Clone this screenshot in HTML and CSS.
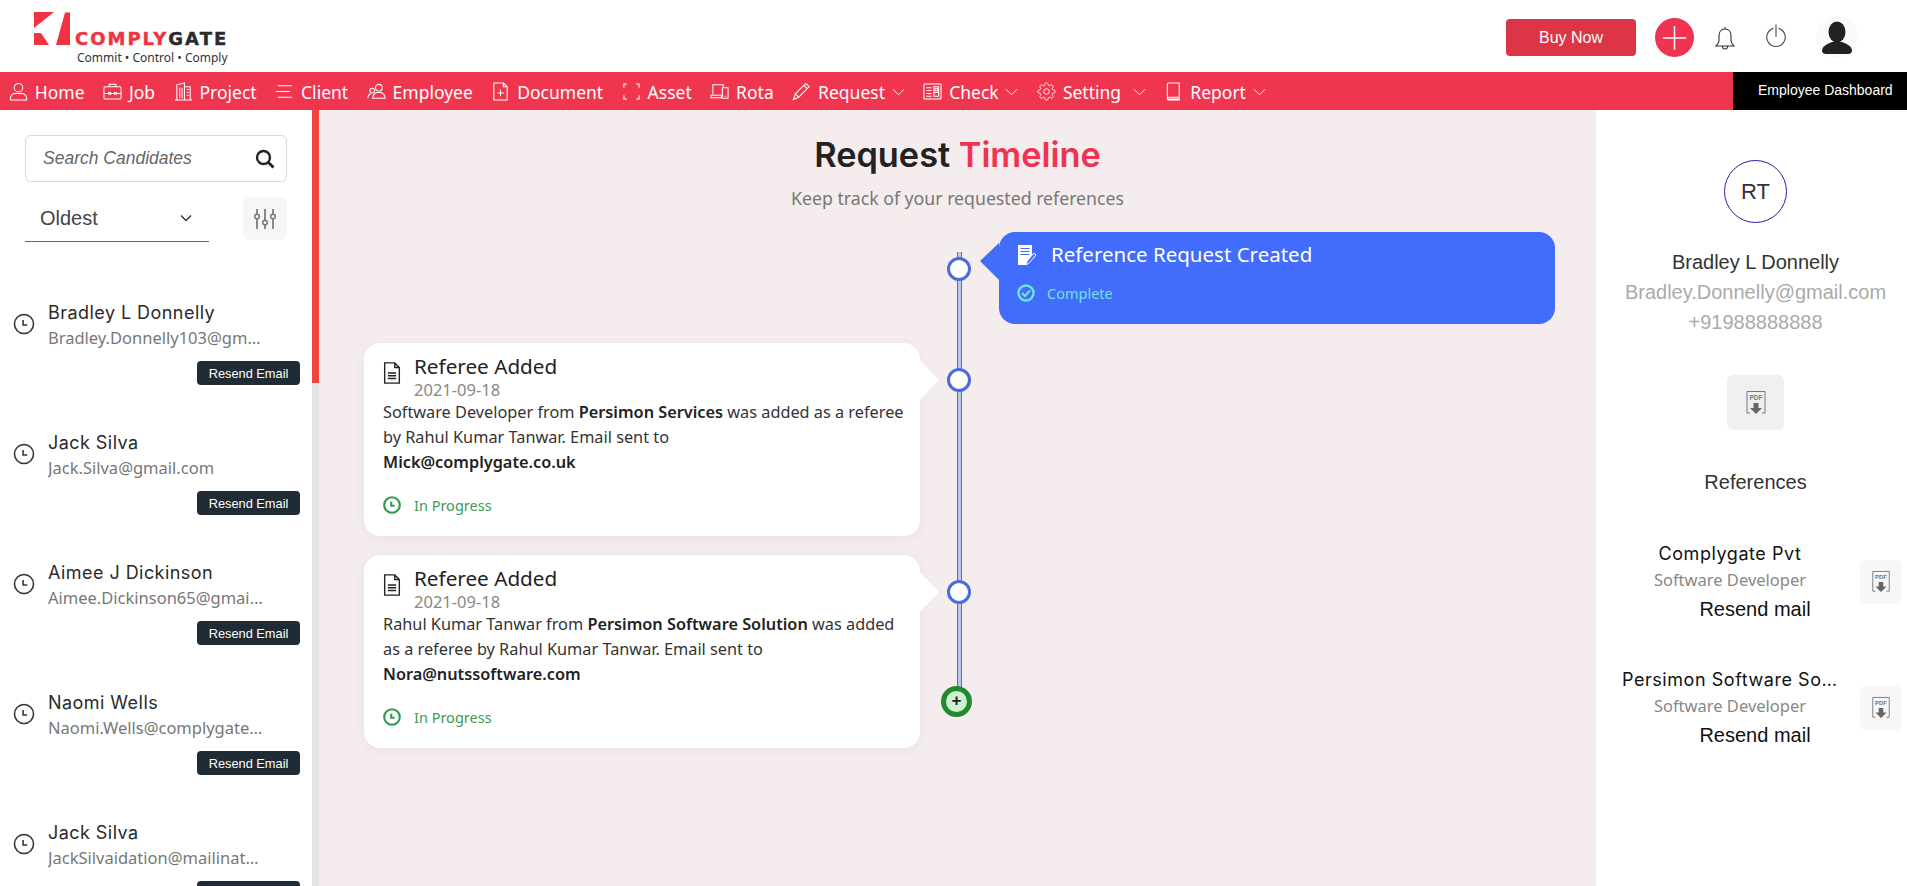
FILE: index.html
```html
<!DOCTYPE html>
<html lang="en">
<head>
<meta charset="utf-8">
<title>Request Timeline</title>
<link rel="stylesheet" href="styles.css">
</head>
<body>
<svg class="defs" width="0" height="0" aria-hidden="true">
  <symbol id="clock" viewBox="0 0 24 24"><circle cx="12" cy="12" r="10.4" fill="none" stroke="currentColor"/><path d="M11 7.500v5.500h4.500" fill="none" stroke="currentColor"/></symbol>
  <symbol id="pdf" viewBox="0 0 24 28"><path d="M3 23V2.500h18V23M3 23v1h3M21 23v1h-3" fill="none" stroke="#777" stroke-width="1"/><text x="12" y="11" text-anchor="middle" class="pdf-text">PDF</text><path d="M9.500 14h5v5h3.500l-6 6-6-6h3.500z" fill="#666"/></symbol>
  <symbol id="doc" viewBox="0 0 18 24"><path d="M1 1h11l5 5v17H1zM12 1v5h5M4.500 12h9M4.500 15h9M4.500 18h9" fill="none" stroke="#222" stroke-width="1.500"/></symbol>
</svg>

<header class="topbar">
  <div class="logo">
    <svg class="logo-mark" viewBox="0 0 37 34"><path d="M0 0h20L0 16zM0 21h7l8 12H0zM31 0.500h5V33H22z" fill="#ef3340"/></svg>
    <div class="logo-words">
      <div class="logo-name"><span class="logo-red">COMPLY</span>GATE</div>
      <div class="logo-tag">Commit • Control • Comply</div>
    </div>
  </div>
  <div class="top-actions">
    <button class="buy">Buy Now</button>
    <span class="add"><svg viewBox="0 0 40 40" width="40" height="40"><path d="M20 8v24M8 20h24" stroke="#fff" stroke-width="1.500"/></svg></span>
    <svg class="bell" viewBox="0 0 20 25" width="20" height="25"><path d="M10 3c-4 0-6 3-6 7v5c0 2-1.500 3.500-3 5h18c-1.500-1.500-3-3-3-5v-5c0-4-2-7-6-7zM10 1v2M7.500 20.500a2.500 2.500 0 0 0 5 0" fill="none" stroke="#333" stroke-width="1.100"/></svg>
    <svg class="power" viewBox="0 0 20 24" width="20" height="24"><path d="M7.500 4.400a9.200 9.200 0 1 0 5 0M10 0.500v12" fill="none" stroke="#444" stroke-width="1.100"/></svg>
    <span class="avatar"><svg viewBox="0 0 42 42" width="42" height="42"><ellipse cx="21" cy="16" rx="8.500" ry="10.500" fill="#222"/><path d="M6 35c0-5 5-7 10-9h10c5 2 10 4 10 9 0 2-2 3-4 3H10c-2 0-4-1-4-3z" fill="#222"/></svg></span>
  </div>
</header>

<nav class="navbar">
  <ul class="menu">
    <li><svg class="ni" viewBox="0 0 20 20"><circle cx="10" cy="6" r="4.500"/><path d="M1.500 19v-2c0-3 3-5 5-5h7c2 0 5 2 5 5v2z"/></svg>Home</li>
    <li><svg class="ni" viewBox="0 0 20 20"><rect x="1" y="5" width="18" height="13" rx="1.500"/><path d="M6.500 5V2.500h7V5M1 12h5M14 12h5M6 11h2v2H6zM12 11h2v2h-2zM8 12h4"/></svg>Job</li>
    <li><svg class="ni" viewBox="0 0 20 20"><path d="M3 19V3l8-2v18zM11 5h6v14H11M1 19h18M6 6v11M8.500 6v11M13.500 8h2M13.500 11h2M13.500 14h2"/></svg>Project</li>
    <li><svg class="ni" viewBox="0 0 20 20"><path d="M3 4h15M1 10h15M3 16h15"/></svg>Client</li>
    <li><svg class="ni" viewBox="0 0 20 20"><circle cx="12.500" cy="6" r="3.500"/><circle cx="5.500" cy="9" r="2.500"/><path d="M6 17c0-3 2-5 4-6h5c2 1 4 3 4 6zM1 17c0-2 1-4 3-4.500"/></svg>Employee</li>
    <li><svg class="ni" viewBox="0 0 20 20"><path d="M3 1h10l4 4v14H3zM13 1v4h4M10 8v7M6.500 11.500h7"/></svg>Document</li>
    <li><svg class="ni" viewBox="0 0 20 20"><path d="M2 6V2h3M15 2h3v4M18 14v4h-3M5 18H2v-4"/></svg>Asset</li>
    <li><svg class="ni" viewBox="0 0 20 20"><path d="M3 13V3h11v2M1 14h11v2.500H1zM13 6h6v11h-6zM16 14.500v1"/></svg>Rota</li>
    <li><svg class="ni" viewBox="0 0 20 20"><path d="M1.500 18.500l2-6L14.500 1.500 18 5 7 16zM3.500 12.500L7 16M12.500 3.500L16 7"/></svg>Request<svg class="chev" viewBox="0 0 14 8"><path d="M1 1l6 6 6-6"/></svg></li>
    <li><svg class="ni" viewBox="0 0 20 20"><rect x="1" y="2" width="18" height="16" rx="1"/><path d="M3.500 6H9M3.500 9H9M3.500 12H9M3.500 15H9M11.500 5h5v10h-5zM11.500 11h5"/><circle cx="14" cy="8" r="1.500"/></svg>Check<svg class="chev" viewBox="0 0 14 8"><path d="M1 1l6 6 6-6"/></svg></li>
    <li class="gap-l"><svg class="ni" viewBox="0 0 24 24"><circle cx="12" cy="12" r="3.500"/><path d="M19.400 15a1.650 1.650 0 0 0 .33 1.820l.06.06a2 2 0 0 1 0 2.830 2 2 0 0 1-2.830 0l-.06-.06a1.650 1.650 0 0 0-1.820-.33 1.650 1.650 0 0 0-1 1.510V21a2 2 0 0 1-2 2 2 2 0 0 1-2-2v-.09A1.650 1.650 0 0 0 9 19.400a1.650 1.650 0 0 0-1.820.33l-.06.06a2 2 0 0 1-2.830 0 2 2 0 0 1 0-2.830l.06-.06a1.650 1.650 0 0 0 .33-1.820 1.650 1.650 0 0 0-1.510-1H3a2 2 0 0 1-2-2 2 2 0 0 1 2-2h.09A1.650 1.650 0 0 0 4.600 9a1.650 1.650 0 0 0-.33-1.820l-.06-.06a2 2 0 0 1 0-2.830 2 2 0 0 1 2.830 0l.06.06a1.650 1.650 0 0 0 1.820.33H9a1.650 1.650 0 0 0 1-1.510V3a2 2 0 0 1 2-2 2 2 0 0 1 2 2v.09a1.650 1.650 0 0 0 1 1.510 1.650 1.650 0 0 0 1.820-.33l.06-.06a2 2 0 0 1 2.830 0 2 2 0 0 1 0 2.830l-.06.06a1.650 1.650 0 0 0-.33 1.820V9a1.650 1.650 0 0 0 1.510 1H21a2 2 0 0 1 2 2 2 2 0 0 1-2 2h-.09a1.650 1.650 0 0 0-1.510 1z"/></svg>Setting<svg class="chev" viewBox="0 0 14 8"><path d="M1 1l6 6 6-6"/></svg></li>
    <li><svg class="ni" viewBox="0 0 20 20"><path d="M3.500 16V2.500a1.500 1.500 0 0 1 1.500-1.500h11v15H5a1.500 1.500 0 0 0 0 3h11v-3M4 18h12"/></svg>Report<svg class="chev" viewBox="0 0 14 8"><path d="M1 1l6 6 6-6"/></svg></li>
  </ul>
  <a class="dash">Employee Dashboard</a>
</nav>

<div class="content">
  <aside class="sidebar">
    <div class="side-inner">
      <div class="search">
        <span class="search-ph">Search Candidates</span>
        <svg viewBox="0 0 20 20" width="20" height="20"><circle cx="8.500" cy="8.500" r="6.500" fill="none" stroke="#222" stroke-width="2.400"/><path d="M13.500 13.500l5 5" stroke="#222" stroke-width="2.800"/></svg>
      </div>
      <div class="filter-row">
        <div class="select"><span>Oldest</span><svg viewBox="0 0 12 8" width="12" height="8"><path d="M1 1.500l5 5 5-5" fill="none" stroke="#333" stroke-width="1.400"/></svg></div>
        <span class="filter-btn"><svg viewBox="0 0 24 24" width="24" height="24"><path d="M4 2v5M4 12v10M12 2v11M12 18v4M20 2v5M20 12v10" stroke="#777" stroke-width="1.700"/><circle cx="4" cy="9.500" r="2.300" fill="none" stroke="#777" stroke-width="1.500"/><circle cx="12" cy="15.500" r="2.300" fill="none" stroke="#777" stroke-width="1.500"/><circle cx="20" cy="9.500" r="2.300" fill="none" stroke="#777" stroke-width="1.500"/></svg></span>
      </div>
      <ul class="cands">
        <li class="cand"><svg class="cand-clock"><use href="#clock"/></svg><div class="cand-text"><div class="cand-name">Bradley L Donnelly</div><div class="cand-mail">Bradley.Donnelly103@gmail.com</div></div><button class="resend">Resend Email</button></li>
        <li class="cand"><svg class="cand-clock"><use href="#clock"/></svg><div class="cand-text"><div class="cand-name">Jack Silva</div><div class="cand-mail">Jack.Silva@gmail.com</div></div><button class="resend">Resend Email</button></li>
        <li class="cand"><svg class="cand-clock"><use href="#clock"/></svg><div class="cand-text"><div class="cand-name">Aimee J Dickinson</div><div class="cand-mail">Aimee.Dickinson65@gmail.com</div></div><button class="resend">Resend Email</button></li>
        <li class="cand"><svg class="cand-clock"><use href="#clock"/></svg><div class="cand-text"><div class="cand-name">Naomi Wells</div><div class="cand-mail">Naomi.Wells@complygate.co.uk</div></div><button class="resend">Resend Email</button></li>
        <li class="cand"><svg class="cand-clock"><use href="#clock"/></svg><div class="cand-text"><div class="cand-name">Jack Silva</div><div class="cand-mail">JackSilvaidation@mailinator.com</div></div><button class="resend">Resend Email</button></li>
      </ul>
    </div>
    <div class="scroll-track"><div class="scroll-thumb"></div></div>
  </aside>

  <main class="main">
    <h1 class="title">Request <span class="title-red">Timeline</span></h1>
    <p class="subtitle">Keep track of your requested references</p>
    <div class="timeline">
      <div class="row">
        <div class="cell"></div>
        <div class="axis"><span class="node"></span></div>
        <article class="card card-blue">
          <div class="blue-head">
            <svg viewBox="0 0 20 22" width="20" height="22"><path d="M1 1h14v11l-6 9H1z" fill="#fff"/><path d="M3.500 4.500h9M3.500 7.500h9M3.500 10.500h9" stroke="#426cfb" stroke-width="1.200"/><path d="M9 21l1-4 7-8 2 2-7 8z" fill="#426cfb" stroke="#fff" stroke-width="1"/></svg>
            <h2 class="blue-title">Reference Request Created</h2>
          </div>
          <div class="status status-done">
            <svg viewBox="0 0 18 18" width="18" height="18"><circle cx="9" cy="9" r="7.500" fill="none" stroke="#6fe3dc" stroke-width="2.400"/><path d="M5 9l3 3 5-5.500" fill="none" stroke="#6fe3dc" stroke-width="2.200"/></svg>Complete
          </div>
        </article>
      </div>
      <div class="row">
        <article class="card card-white">
          <div class="card-head">
            <svg class="doc"><use href="#doc"/></svg>
            <div><h2 class="card-title">Referee Added</h2><div class="card-date">2021-09-18</div></div>
          </div>
          <p class="card-body">Software Developer from <b>Persimon Services</b> was added as a referee by Rahul Kumar Tanwar. Email sent to <b class="card-mail">Mick@complygate.co.uk</b></p>
          <div class="status status-prog"><svg class="prog-clock"><use href="#clock"/></svg>In Progress</div>
        </article>
        <div class="axis"><span class="node"></span></div>
        <div class="cell"></div>
      </div>
      <div class="row">
        <article class="card card-white">
          <div class="card-head">
            <svg class="doc"><use href="#doc"/></svg>
            <div><h2 class="card-title">Referee Added</h2><div class="card-date">2021-09-18</div></div>
          </div>
          <p class="card-body">Rahul Kumar Tanwar from <b>Persimon Software Solution</b> was added as a referee by Rahul Kumar Tanwar. Email sent to <b class="card-mail">Nora@nutssoftware.com</b></p>
          <div class="status status-prog"><svg class="prog-clock"><use href="#clock"/></svg>In Progress</div>
        </article>
        <div class="axis"><span class="node"></span><span class="node-add">+</span></div>
        <div class="cell"></div>
      </div>
    </div>
  </main>

  <aside class="panel">
    <div class="p-top">
      <div class="initials">RT</div>
      <div class="p-name">Bradley L Donnelly</div>
      <div class="p-sub">Bradley.Donnelly@gmail.com</div>
      <div class="p-sub">+91988888888</div>
      <span class="pdf-big"><svg width="24" height="28"><use href="#pdf"/></svg></span>
      <div class="p-refs">References</div>
    </div>
    <div class="refs">
      <div class="ref">
        <div class="ref-text"><div class="ref-name">Complygate Pvt</div><div class="ref-role">Software Developer</div><div class="ref-mail">Resend mail</div></div>
        <span class="pdf-small"><svg width="22" height="26"><use href="#pdf"/></svg></span>
      </div>
      <div class="ref">
        <div class="ref-text"><div class="ref-name">Persimon Software Solution</div><div class="ref-role">Software Developer</div><div class="ref-mail">Resend mail</div></div>
        <span class="pdf-small"><svg width="22" height="26"><use href="#pdf"/></svg></span>
      </div>
    </div>
  </aside>
</div>
</body>
</html>
```

FILE: styles.css
```css
* { box-sizing: border-box; }
html, body { margin: 0; height: 100%; }
body { height: 886px; overflow: hidden; display: flex; flex-direction: column; background: #fff; font-family: "Noto Sans", sans-serif; color: #222; }
ul { list-style: none; margin: 0; padding: 0; }
h1, h2, p { margin: 0; font-weight: 400; }
button { font-family: inherit; border: 0; }
.defs { position: absolute; }
.pdf-text { font: 700 6.500px "Liberation Sans", sans-serif; fill: #777; }

/* top bar */
.topbar { height: 72px; flex: none; display: flex; justify-content: space-between; padding: 12px 49px 0 34px; }
.logo { display: flex; align-items: flex-start; width: 193px; }
.logo-mark { width: 37px; height: 34px; flex: none; }
.logo-words { margin: 17px 0 0 4px; }
.logo-name { font: 700 18px/20px "DejaVu Sans", sans-serif; color: #2b2b2b; white-space: nowrap; letter-spacing: 2px; height: 20px; -webkit-text-stroke: 0.4px currentColor; }
.logo-red { color: #ef3340; }
.logo-tag { font: 12px/13px "Noto Sans", sans-serif; color: #333; margin: 2px 0 0 2px; white-space: nowrap; }
.top-actions { display: flex; align-items: flex-start; }
.buy { width: 130px; height: 37px; margin: 7px 19px 0 0; background: #dc3545; color: #fff; font: 16px "Liberation Sans", sans-serif; border-radius: 4px; }
.add { width: 39px; height: 39px; margin: 6px 21px 0 0; border-radius: 50%; background: #ef3350; display: flex; align-items: center; justify-content: center; }
.bell { margin: 14px 31px 0 0; }
.power { margin: 12px 30px 0 0; }
.avatar { width: 42px; height: 42px; margin-top: 4px; border-radius: 50%; background: #fafafa; }

/* nav */
.navbar { height: 38px; flex: none; display: flex; justify-content: space-between; background: #f0364f; color: #fff; }
.menu { display: flex; align-items: center; gap: 18.600px; padding: 1px 0 0 9px; font-size: 17.500px; }
.menu li { display: flex; align-items: center; gap: 6.800px; white-space: nowrap; }
.ni { width: 19px; height: 19px; fill: none; stroke: #fff; stroke-width: 1.100; flex: none; }
.chev { width: 13px; height: 8px; fill: none; stroke: #fff; stroke-width: 1; }
.gap-l .chev { margin-left: 5px; }
.dash { width: 174px; background: #000; color: #fff; font: 14px/36px "Liberation Sans", sans-serif; padding-left: 25px; white-space: nowrap; }

/* layout */
.content { flex: 1; min-height: 0; display: flex; }
.sidebar { width: 319px; flex: none; display: flex; overflow: hidden; }
.side-inner { width: 312px; padding: 25px 12px 0 13px; }
.scroll-track { width: 7px; background: #e4e4e4; }
.scroll-thumb { height: 273px; background: #f1453f; }
.main { flex: 1; background: #f4eced; padding-top: 22px; min-width: 0; overflow: hidden; }
.panel { width: 311px; flex: none; padding-top: 50px; font-family: "Liberation Sans", sans-serif; }
.p-top { display: flex; flex-direction: column; align-items: center; padding-left: 8px; }

/* sidebar */
.search { width: 262px; height: 47px; margin-left: 12px; border: 1px solid #d8d8d8; border-radius: 6px; display: flex; align-items: center; justify-content: space-between; padding: 0 11px 0 17px; }
.search-ph { font: italic 17.500px "Liberation Sans", sans-serif; color: #666; }
.filter-row { display: flex; margin: 15px 0 0 12px; align-items: flex-start; }
.select { width: 184px; height: 45px; border-bottom: 1px solid #666; display: flex; align-items: center; justify-content: space-between; padding: 0 17px 2px 15px; font: 20px "Liberation Sans", sans-serif; color: #444; }
.filter-btn { width: 44px; height: 43px; margin-left: 34px; border-radius: 6px; background: #f6f6f6; display: flex; align-items: center; justify-content: center; }
.cands { margin-top: 59px; }
.cand { height: 130px; display: grid; grid-template-columns: 22px 216px; column-gap: 13px; align-items: start; align-content: start; }
.cand-clock { width: 22px; height: 22px; color: #333; margin-top: 12px; stroke-width: 1.700; }
.cand-name { font: 400 18px/23px Inter, sans-serif; letter-spacing: 0.450px; color: #2a2a2a; white-space: nowrap; }
.cand-mail { font: 16.500px/24px "Noto Sans", sans-serif; color: #777; margin-top: 2px; white-space: nowrap; overflow: hidden; text-overflow: ellipsis; }
.resend { grid-column: 2; width: 103px; height: 24px; margin: 11px 0 0 149px; background: #212b36; color: #fff; border-radius: 4px; font: 12.800px "Liberation Sans", sans-serif; padding: 0; white-space: nowrap; }

/* main */
.title { text-align: center; font: 600 34.300px/46px Inter, sans-serif; color: #222; }
.title-red { color: #ef3350; }
.subtitle { text-align: center; font-size: 17.700px; line-height: 24px; color: #777; margin-top: 8px; }
.timeline { position: relative; margin: 22px 0 0 45px; display: flex; flex-direction: column; gap: 19px; }
.timeline::before { content: ""; position: absolute; left: 593px; top: 20px; width: 3px; height: 436px; background: #b9c8ee; border-left: 1px solid #4e6fc4; border-right: 1px solid #4e6fc4; }
.row { display: grid; grid-template-columns: 556px 79px 556px; align-items: start; }
.axis { display: flex; flex-direction: column; align-items: center; padding: 25px 2px 0 0; }
.node { width: 24px; height: 24px; border: 3px solid #4a6cdc; border-radius: 50%; background: #fff; position: relative; }
.node-add { width: 31px; height: 31px; margin: 82px 4px 0 0; border: 5px solid #23892f; border-radius: 50%; background: #cbf2cf; color: #222; font: 700 17px/20px "Liberation Sans", sans-serif; text-align: center; position: relative; }
.card { position: relative; border-radius: 16px; }
.card::after { content: ""; position: absolute; width: 0; height: 0; border-style: solid; }
.card-blue { height: 92px; background: #426cfb; padding: 12px 18px; color: #fff; }
.card-blue::after { left: -19px; top: 11px; border-width: 18px 19px 19px 0; border-color: transparent #426cfb transparent transparent; }
.blue-head { display: flex; align-items: center; gap: 14px; }
.blue-title { font-size: 20.500px; line-height: 22px; margin-top: -3px; }
.card-white { height: 193px; background: #fff; padding: 11px 12px 11px 19px; box-shadow: 0 2px 12px rgba(0,0,0,.05); }
.card-white::after { right: -19px; top: 17px; border-width: 20px 0 20px 19px; border-color: transparent transparent transparent #fff; }
.card-head { display: flex; gap: 13px; }
.doc { width: 18px; height: 22px; flex: none; margin-top: 8px; }
.card-title { font-size: 20.700px; line-height: 24px; color: #222; }
.card-date { font-size: 16.500px; line-height: 20px; color: #888; margin-top: 2px; }
.card-body { font-size: 16.300px; line-height: 25px; color: #333; }
.card-body b { font-weight: 600; color: #222; }
.card-body .card-mail { display: block; }
.status { display: flex; align-items: center; font-size: 14.500px; }
.status-done { color: #6fe3dc; gap: 12px; margin-top: 17px; }
.status-prog { color: #3f9a55; gap: 13px; margin-top: 20px; }
.prog-clock { width: 18px; height: 18px; color: #2f9a4b; stroke-width: 2.800; }

/* right panel */
.initials { width: 63px; height: 63px; flex: none; border: 1px solid #2a1ea0; border-radius: 50%; font-size: 22px; line-height: 61px; text-align: center; color: #333; }
.p-name { font-size: 20px; line-height: 30px; color: #333; margin-top: 24px; }
.p-sub { font-size: 20px; line-height: 30px; color: #aaa; }
.pdf-big { width: 57px; height: 55px; margin-top: 38px; border-radius: 6px; background: #f0f0f0; display: flex; align-items: center; justify-content: center; }
.p-refs { font-size: 20px; line-height: 26px; color: #333; margin-top: 39px; }
.refs { margin-top: 47px; }
.ref { height: 126px; display: flex; align-items: flex-start; gap: 22px; padding-left: 26px; }
.ref-text { width: 216px; text-align: center; flex: none; }
.ref-name { font: 400 18px/24px Inter, sans-serif; letter-spacing: 0.550px; color: #111; white-space: nowrap; overflow: hidden; text-overflow: ellipsis; }
.ref-role { font: 16.500px/24px "Noto Sans", sans-serif; color: #888; margin-top: 2px; }
.ref-mail { font-size: 20px; line-height: 28px; color: #111; margin: 3px 0 0 50px; }
.pdf-small { width: 42px; height: 44px; margin-top: 18px; border-radius: 6px; background: #f7f7f7; display: flex; align-items: center; justify-content: center; }
```
